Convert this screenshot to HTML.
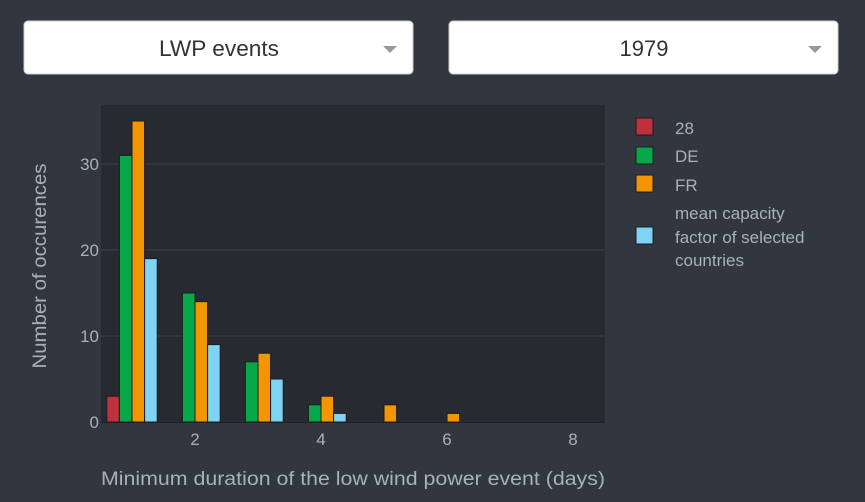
<!DOCTYPE html>
<html><head><meta charset="utf-8"><style>
html,body{margin:0;padding:0;background:#32363f;width:865px;height:502px;overflow:hidden}
svg{display:block}
text{font-family:"Liberation Sans",sans-serif}
</style></head><body>
<svg width="865" height="502" xmlns="http://www.w3.org/2000/svg">
<rect width="865" height="502" fill="#32363f"/>
<rect x="24" y="21" width="389" height="53" rx="4" fill="#fff" stroke="#ccc"/>
<text x="219" y="56" font-size="22" text-anchor="middle" fill="#333" textLength="120" lengthAdjust="spacingAndGlyphs">LWP events</text>
<path d="M383 46 L397 46 L390 53 Z" fill="#999"/>
<rect x="449" y="21" width="389" height="53" rx="4" fill="#fff" stroke="#ccc"/>
<text x="644" y="56" font-size="22" text-anchor="middle" fill="#333">1979</text>
<path d="M808 46 L822 46 L815 53 Z" fill="#999"/>
<rect x="101" y="105" width="504" height="318" fill="#272a30"/>
<g stroke="#363a42" stroke-width="1.5">
<line x1="101" x2="605" y1="164" y2="164"/>
<line x1="101" x2="605" y1="250" y2="250"/>
<line x1="101" x2="605" y1="336" y2="336"/>
</g>
<g font-size="17" fill="#aab0b8" text-anchor="end">
<text x="99" y="428">0</text><text x="99" y="342">10</text><text x="99" y="256">20</text><text x="99" y="170">30</text>
</g>
<g font-size="17" fill="#aab0b8" text-anchor="middle">
<text x="195" y="445">2</text><text x="321" y="445">4</text><text x="447" y="445">6</text><text x="573" y="445">8</text>
</g>
<g stroke="#1a1c1f" stroke-width="1">
<rect x="106.8" y="396.2" width="12.6" height="25.8" fill="#c0313d"/>
<rect x="119.4" y="155.4" width="12.6" height="266.6" fill="#07a84a"/>
<rect x="132" y="121" width="12.6" height="301" fill="#f29500"/>
<rect x="144.6" y="258.6" width="12.6" height="163.4" fill="#80d4f3"/>
<rect x="182.4" y="293" width="12.6" height="129" fill="#07a84a"/>
<rect x="195" y="301.6" width="12.6" height="120.4" fill="#f29500"/>
<rect x="207.6" y="344.6" width="12.6" height="77.4" fill="#80d4f3"/>
<rect x="245.4" y="361.8" width="12.6" height="60.2" fill="#07a84a"/>
<rect x="258" y="353.2" width="12.6" height="68.8" fill="#f29500"/>
<rect x="270.6" y="379" width="12.6" height="43" fill="#80d4f3"/>
<rect x="308.4" y="404.8" width="12.6" height="17.2" fill="#07a84a"/>
<rect x="321" y="396.2" width="12.6" height="25.8" fill="#f29500"/>
<rect x="333.6" y="413.4" width="12.6" height="8.6" fill="#80d4f3"/>
<rect x="384" y="404.8" width="12.6" height="17.2" fill="#f29500"/>
<rect x="447" y="413.4" width="12.6" height="8.6" fill="#f29500"/>
</g>
<line x1="101" x2="605" y1="422.5" y2="422.5" stroke="#1e2024" stroke-width="1"/>
<text x="46" y="266" font-size="19" fill="#aab0b8" text-anchor="middle" textLength="205" lengthAdjust="spacingAndGlyphs" transform="rotate(-90 46 266)">Number of occurences</text>
<text x="353" y="485" font-size="19" fill="#aab0b8" text-anchor="middle" textLength="504" lengthAdjust="spacingAndGlyphs">Minimum duration of the low wind power event (days)</text>
<g stroke="#1a1c1f">
<rect x="636" y="118" width="17" height="17" fill="#c0313d"/>
<rect x="636" y="147" width="17" height="17" fill="#07a84a"/>
<rect x="636" y="175" width="17" height="17" fill="#f29500"/>
<rect x="636" y="227" width="17" height="17" fill="#80d4f3"/>
</g>
<g font-size="17" fill="#aab0b8">
<text x="675" y="134">28</text><text x="675" y="162">DE</text><text x="675" y="191">FR</text>
<text x="675" y="219">mean capacity</text><text x="675" y="243">factor of selected</text><text x="675" y="266">countries</text>
</g>
</svg>
</body></html>
